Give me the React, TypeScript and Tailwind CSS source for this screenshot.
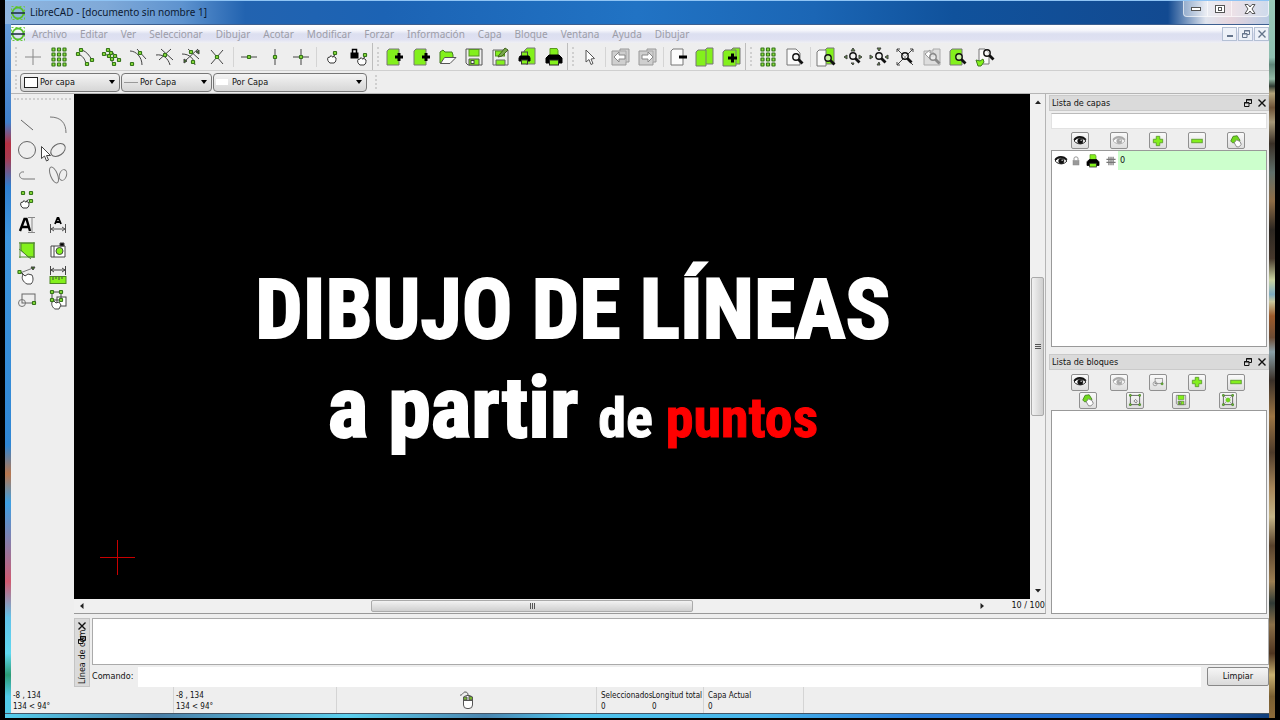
import React from 'react';

type IconProps = { children: React.ReactNode; className?: string };

function Icon({ children, className = 'h-6 w-6' }: IconProps) {
  return (
    <svg viewBox="0 0 24 24" className={`shrink-0 ${className}`} fill="none" stroke="#444" strokeWidth="1" aria-hidden="true">
      {children}
    </svg>
  );
}

const Node = ({ x, y }: { x: number; y: number }) => (
  <rect x={x - 1.5} y={y - 1.5} width="3" height="3" rx="0.5" fill="#8be03a" stroke="#35751a" strokeWidth="1.2" />
);

const Nodes = ({ at }: { at: number[][] }) => (
  <>
    {at.map(([x, y]) => (
      <Node key={`${x}-${y}`} x={x} y={y} />
    ))}
  </>
);

const Lens = ({ x, y, color = '#111' }: { x: number; y: number; color?: string }) => (
  <g stroke={color}>
    <circle cx={x} cy={y} r="3.2" fill="#f4f4f4" fillOpacity="0.6" strokeWidth="1.4" />
    <path d={`M${x + 2.5} ${y + 2.5}l4 4`} strokeWidth="2.8" />
  </g>
);

const Hand = ({ x, y }: { x: number; y: number }) => (
  <path
    transform={`translate(${x} ${y})`}
    d="M1 3.5C0 5 1 8 3 9h4c2-1 2-3 2-5L7 2.5 5.5 3 4 1.5 3 3zM5.5 3l3-2.5"
    fill="#fff"
    stroke="#333"
  />
);

const Page = ({ x, y, fill = '#83f01c', w = 12 }: { x: number; y: number; fill?: string; w?: number }) => (
  <path d={`M${x} ${y + 2}l2-2h${w - 2}v16h-${w}z`} fill={fill} stroke="#777" />
);

const PrinterShape = () => (
  <g>
    <path d="M8 3.5h7l1 2v6H8z" fill="#83f01c" stroke="#5a9a1c" />
    <path d="M7 10h10l3 3v5H4v-5z" fill="#000" stroke="#000" />
    <rect x="7.5" y="15" width="9" height="5" fill="#83f01c" stroke="#222" />
  </g>
);

const EyeShape = ({ color = '#111' }: { color?: string }) => (
  <g stroke={color}>
    <path d="M2 12c3-6 14-8 20 0-4 6-14 7-20 0z" fill="#fff" strokeWidth="1.6" />
    <path d="M2 10C6 3 17 3 22 10" strokeWidth="3" />
    <circle cx="12.5" cy="12" r="4.5" fill={color} />
    <circle cx="14" cy="10.5" r="1.2" fill="#fff" stroke="none" />
  </g>
);

const PlusShape = () => (
  <path d="M9 4h6v5h5v6h-5v5H9v-5H4V9h5z" fill="#83f01c" stroke="#5b9b2c" strokeWidth="1.5" />
);

const MinusShape = () => <rect x="3" y="9" width="18" height="6" fill="#83f01c" stroke="#5b9b2c" strokeWidth="1.5" />;

const EditShape = () => (
  <g>
    <path d="M3 12l4-8 7-1 5 8-5 4H6z" fill="#71d91d" stroke="#417c20" strokeWidth="1.4" />
    <path d="M9 15l4-5 6 3 2 5-4 4h-4z" fill="#fff" stroke="#777" strokeWidth="1.4" />
  </g>
);

const gridPoints = [4.5, 9.5, 14.5, 19.5].flatMap((y) => [6.5, 12, 17.5].map((x) => [x, y]));

const icons: Record<string, React.ReactNode> = {
  free: <path d="M12 4v16M4 12h16" stroke="#888" />,
  grid: <Nodes at={gridPoints} />,
  endpoint: (
    <>
      <path d="M8 5c5 2 7 5 10 10M4 9c5 2 7 5 8 10" />
      <Nodes at={[[7, 5], [4, 9], [18, 15], [13, 19]]} />
    </>
  ),
  onEntity: (
    <>
      <path d="M8 5c5 2 8 5 11 11M4 9c5 1 8 5 9 11" />
      <Nodes at={[[8, 5], [4, 9], [11, 8], [9, 11], [15, 11], [12, 14], [19, 15], [14, 19]]} />
    </>
  ),
  center: (
    <>
      <path d="M4 6c6 0 12 6 12 14M11 4l9 10" />
      <Nodes at={[[14, 8], [6, 19]]} />
    </>
  ),
  middle: (
    <>
      <path d="M3 10c7-1 12 3 14 10M18 4L6 15M8 4l12 11" />
      <Nodes at={[[12, 10]]} />
    </>
  ),
  distance: (
    <>
      <path d="M3 9c8 0 12 5 13 11M19 4L6 16M9 4l11 10" />
      <Nodes at={[[12, 7], [14, 17]]} />
      <path d="M20 5v4l-3-2zM5 14v4l3-2z" fill="#397819" />
    </>
  ),
  intersection: (
    <>
      <path d="M6 5l12 14M18 5L6 19" />
      <Node x={12} y={12} />
    </>
  ),
  horizontal: (
    <>
      <path d="M4 12h16" />
      <Node x={12} y={12} />
    </>
  ),
  vertical: (
    <>
      <path d="M12 4v16" />
      <Node x={12} y={12} />
    </>
  ),
  orthogonal: (
    <>
      <path d="M12 4v16M4 12h16" />
      <Node x={12} y={12} />
    </>
  ),
  relZero: (
    <>
      <Hand x={6} y={9} />
      <Node x={14} y={8} />
    </>
  ),
  lockZero: (
    <>
      <rect x="4" y="8" width="7" height="5" fill="#000" stroke="#000" />
      <path d="M5.5 8V4.5h4V8" stroke="#000" strokeWidth="1.5" />
      <Hand x={10} y={11} />
      <Node x={18} y={10} />
    </>
  ),
  newFile: (
    <>
      <Page x={4} y={4} />
      <path d="M12 12h8M16 8v8" stroke="#000" strokeWidth="3" />
    </>
  ),
  open: (
    <g stroke="#447d23">
      <path d="M4 18V7l3-2 2 2h7l1 3v3L5 18z" fill="#83f01c" />
      <path d="M4.5 18.5l4-6H20l-6 6z" fill="#fafafa" stroke="#555" />
    </g>
  ),
  save: (
    <>
      <path d="M4 4h16v16H6l-2-2z" fill="#eee" stroke="#555" />
      <rect x="7" y="4.5" width="10" height="6.5" fill="#83f01c" stroke="#579422" />
      <path d="M7 20v-6h10v6z" fill="#83f01c" stroke="#555" />
      <rect x="9" y="15.5" width="3" height="3" fill="#fff" />
    </>
  ),
  saveAs: (
    <>
      <path d="M4 5h15v15H4z" fill="#eee" stroke="#666" />
      <rect x="6.5" y="6" width="9" height="5" fill="#83f01c" stroke="#579422" />
      <path d="M7 20v-5h9v5z" fill="#83f01c" stroke="#666" />
      <path d="M10 10l6-7 3 2-6 6-4 1z" fill="#79a84d" stroke="#43641f" />
    </>
  ),
  preview: (
    <>
      <path d="M9 6l3-3h8v16h-9z" fill="#83f01c" stroke="#777" />
      <rect x="6.5" y="7" width="6" height="5" fill="#83f01c" stroke="#444" />
      <path d="M5 11h9l1 2v3H4v-3z" fill="#000" stroke="#000" />
      <rect x="6.5" y="15" width="6" height="4" fill="#83f01c" stroke="#333" />
    </>
  ),
  print: <PrinterShape />,
  arrow: <path d="M8 5v12l3-2.500 2 5 2-1-2-4.500 3.500-.5z" fill="#fff" stroke="#555" />,
  undo: (
    <>
      <path d="M11 4h9v13h-3v3H3V6h8z" fill="#cfcfcf" stroke="#999" />
      <path d="M11 6h6v11" stroke="#aaa" />
      <path d="M5 12l5-5v3h6v4h-6v3z" fill="#fff" stroke="#888" />
    </>
  ),
  redo: (
    <>
      <path d="M11 4h9v13h-3v3H3V6h8z" fill="#cfcfcf" stroke="#999" />
      <path d="M11 6h6v11" stroke="#aaa" />
      <path d="M17 12l-5-5v3H6v4h6v3z" fill="#fff" stroke="#888" />
    </>
  ),
  cut: (
    <>
      <Page x={4} y={4} fill="#fcfcfc" />
      <path d="M12 12h8" stroke="#000" strokeWidth="3" />
    </>
  ),
  copy: (
    <>
      <Page x={12} y={3} w={8} />
      <Page x={3} y={5} w={10} />
    </>
  ),
  paste: (
    <>
      <Page x={11} y={3} w={9} />
      <Page x={3} y={5} w={13} />
      <path d="M8 13h9M12.500 8.500v9" stroke="#000" strokeWidth="3" />
    </>
  ),
  zoomPage: (
    <>
      <path d="M4 4h9l4 4v12H4z" fill="#fafafa" stroke="#777" />
      <Lens x={13} y={12} />
    </>
  ),
  zoomRedraw: (
    <>
      <Page x={11} y={3} w={9} />
      <Page x={3} y={5} w={9} fill="#fafafa" />
      <Lens x={14} y={13} />
    </>
  ),
  zoomIn: (
    <>
      <path d="M12 3l2 3h-4zM3 12l3-2v4zM21 12l-3-2v4zM12 20l-2-2h3z" fill="#5f8c40" />
      <Lens x={12} y={11} />
    </>
  ),
  zoomOut: (
    <>
      <path d="M12 6l2-3h-4zM6 12l-3-2v4zM18 12l3-2v4zM10 20l2-3 1 3z" fill="#5f8c40" />
      <Lens x={12} y={11} />
    </>
  ),
  zoomAuto: (
    <>
      <path d="M4 4l16 16M20 4L4 20M4 7V4h3M17 4h3v3M4 17v3h3" />
      <Lens x={12} y={11} />
    </>
  ),
  zoomPrevious: (
    <>
      <path d="M4 6h9V4h7v16H4z" fill="#ddd" stroke="#aaa" />
      <path d="M5 9l5-4v3h4v3h-4v3z" fill="#fff" stroke="#999" />
      <Lens x={13} y={12} color="#888" />
    </>
  ),
  zoomWindow: (
    <>
      <Page x={4} y={4} />
      <Lens x={13} y={12} />
    </>
  ),
  zoomPan: (
    <>
      <path d="M6 4h6l4 4v11H6z" fill="#fafafa" stroke="#777" />
      <Lens x={14} y={8} />
      <path d="M3 15l4 1 3-2 1 3-3 4H5z" fill="#83f01c" stroke="#3f7c1f" />
    </>
  ),
  line: <path d="M6 7l12 10" stroke="#666" />,
  arc: <path d="M4 4c11 0 16 6 16 16" stroke="#777" />,
  circle: <circle cx="12" cy="12" r="8.500" stroke="#666" />,
  ellipse: <ellipse cx="12" cy="12" rx="8" ry="5.500" transform="rotate(-35 12 12)" stroke="#666" />,
  polyline: <path d="M9 9c-6-1-6 7 0 7h11" stroke="#777" />,
  spline: (
    <g stroke="#777">
      <ellipse cx="8" cy="12" rx="3.500" ry="8.500" transform="rotate(-22 8 12)" />
      <ellipse cx="17" cy="12" rx="3.500" ry="5.500" transform="rotate(18 17 12)" />
    </g>
  ),
  points: (
    <>
      <Hand x={5} y={11} />
      <Nodes at={[[8, 5], [16, 5], [16, 13]]} />
    </>
  ),
  text: (
    <>
      <path d="M5 18L9.500 6h2L15 18M7 14h6" stroke="#000" strokeWidth="2.400" />
      <path d="M13 4.500h7M13 19.500h7M17 5v14" stroke="#888" />
    </>
  ),
  mtext: (
    <>
      <path d="M9 11l2.500-6h1L15 11M10 9h4" stroke="#000" strokeWidth="1.800" />
      <path d="M4.500 11v9M19.500 11v9M5 16h14M8 14l-3 2 3 2M16 14l3 2-3 2" stroke="#555" />
    </>
  ),
  hatch: (
    <>
      <path d="M6 5h13v14H13L6 12z" fill="#83f01c" stroke="#4c8522" />
      <path d="M4 11l12 10M5 4v16M19 4v16M4 5h16M4 19h16" stroke="#558b35" />
    </>
  ),
  image: (
    <>
      <path d="M5 8h14v11H5zM8 8v11" fill="#fff" />
      <path d="M14 5h4v3h-4z" fill="#000" />
      <circle cx="13.500" cy="13" r="3.500" fill="#83f01c" />
    </>
  ),
  modify: (
    <>
      <path d="M5 10l13-5" stroke="#777" />
      <path d="M8 12c-2 3 0 7 4 9h4c3-3 2-7 1-9l-4-1-3 2-5-5z" fill="#fff" stroke="#444" />
      <path d="M16 4h4l-2 3z" fill="#397819" />
      <Node x={4.5} y={9} />
    </>
  ),
  measure: (
    <>
      <path d="M4.500 3v9M19.500 3v9M5 7h14M8 5L5 7l3 2M16 5l3 2-3 2" />
      <rect x="4" y="13.500" width="16" height="7" fill="#83f01c" stroke="#4c8522" />
      <path d="M7 14v3M10 14v2M13 14v3M16 14v2" />
    </>
  ),
  block: (
    <>
      <rect x="7" y="6" width="13" height="9" stroke="#666" />
      <circle cx="7" cy="15" r="3.500" stroke="#777" />
      <Node x={19} y={15} />
    </>
  ),
  select: (
    <>
      <rect x="11" y="9" width="9" height="9" fill="#fff" />
      <path d="M6 4h9v8H6z" />
      <path d="M6 14c-1 3 1 6 3 7h4l2-4-2-3-3 1-2-2z" fill="#fff" />
      <Nodes at={[[6, 4], [15, 4], [6, 12], [15, 12]]} />
    </>
  ),
  eye: <EyeShape />,
  eyeOff: <EyeShape color="#aaa" />,
  plus: <PlusShape />,
  minus: <MinusShape />,
  edit: <EditShape />,
  blockRename: (
    <>
      <rect x="4" y="4" width="16" height="16" stroke="#555" strokeWidth="1.500" />
      <Nodes at={[[4, 4], [20, 4], [4, 20], [20, 20]]} />
      <path d="M10 14l3-3 3 3-2 3z" />
    </>
  ),
  blockInsert: (
    <>
      <rect x="4" y="4" width="16" height="16" stroke="#555" strokeWidth="1.500" />
      <path d="M4 4l16 16M20 4L4 20" stroke="#777" />
      <path d="M8 12h8M12 8v8" stroke="#71d91d" strokeWidth="4" />
      <Nodes at={[[4, 4], [20, 4], [4, 20], [20, 20]]} />
    </>
  ),
  lock: (
    <>
      <rect x="6" y="11" width="12" height="9" fill="#999" stroke="#888" />
      <path d="M8 11V6c0-3 8-3 8 0v5" stroke="#999" strokeWidth="2" />
    </>
  ),
  construct: (
    <path d="M1 8h22M1 15h22M7 2v20M12 2v20M17 2v20" stroke="#777" strokeWidth="3" />
  ),
};

const menus = [
  'Archivo', 'Editar', 'Ver', 'Seleccionar', 'Dibujar', 'Acotar', 'Modificar',
  'Forzar', 'Información', 'Capa', 'Bloque', 'Ventana', 'Ayuda', 'Dibujar',
];

type Tool = [icon: string, label: string] | null;

const snapTools: Tool[] = [
  ['free', 'Forzado libre'], ['grid', 'Forzar a rejilla'], ['endpoint', 'Puntos finales'], ['onEntity', 'Sobre entidad'],
  ['center', 'Centros'], ['middle', 'Puntos medios'], ['distance', 'Distancia'], ['intersection', 'Intersección'], null,
  ['horizontal', 'Restringir horizontal'], ['vertical', 'Restringir vertical'], ['orthogonal', 'Restringir ortogonal'], null,
  ['relZero', 'Mover cero relativo'], ['lockZero', 'Bloquear cero relativo'],
];
const fileTools: Tool[] = [
  ['newFile', 'Nuevo'], ['newFile', 'Nuevo desde plantilla'], ['open', 'Abrir'], ['save', 'Guardar'],
  ['saveAs', 'Guardar como'], ['preview', 'Vista previa'], ['print', 'Imprimir'],
];
const editTools: Tool[] = [
  ['arrow', 'Seleccionar'], null, ['undo', 'Deshacer'], ['redo', 'Rehacer'], null,
  ['cut', 'Cortar'], ['copy', 'Copiar'], ['paste', 'Pegar'],
];
const viewTools: Tool[] = [
  ['grid', 'Rejilla'], ['zoomPage', 'Borrador'], null, ['zoomRedraw', 'Redibujar'], ['zoomIn', 'Acercar'],
  ['zoomOut', 'Alejar'], ['zoomAuto', 'Zoom automático'], ['zoomPrevious', 'Vista anterior'],
  ['zoomWindow', 'Zoom ventana'], ['zoomPan', 'Desplazar'],
];
const drawTools: Tool[] = [
  ['line', 'Línea'], ['arc', 'Arco'], ['circle', 'Círculo'], ['ellipse', 'Elipse'], ['polyline', 'Polilínea'],
  ['spline', 'Spline'], ['points', 'Puntos'], null, ['text', 'Texto'], ['mtext', 'Acotar'], ['hatch', 'Sombreado'],
  ['image', 'Imagen'], ['modify', 'Modificar'], ['measure', 'Información'], ['block', 'Bloque'], ['select', 'Seleccionar'],
];

function Handle() {
  return (
    <div className="w-[9px] shrink-0 self-stretch py-1 pl-1">
      <div className="h-full w-0 border-l-2 border-dotted border-[#cfcfcf]" />
    </div>
  );
}

function ToolGroup({ tools, label, className }: { tools: Tool[]; label: string; className: string }) {
  return (
    <div role="toolbar" aria-label={label} className={`flex shrink-0 items-center border-r ${className}`}>
      <Handle />
      {tools.map((tool, i) =>
        tool ? (
          <button key={i} title={tool[1]} className="flex min-w-0 flex-1 justify-center">
            <Icon>{icons[tool[0]]}</Icon>
          </button>
        ) : (
          <div key={i} className="flex w-[5px] justify-center">
            <div className="h-5 w-px bg-[#d4d4d4]" />
          </div>
        ),
      )}
    </div>
  );
}

function PenSelect({ label, value, swatch, className }: { label: string; value: string; swatch: string; className: string }) {
  return (
    <label className={`flex h-[19px] shrink-0 items-center rounded-sm border border-[#777] bg-linear-to-b from-[#f4f4f4] to-[#d6d6d6] pr-1 ${className}`}>
      <span className={`shrink-0 ${swatch}`} />
      <select aria-label={label} className="min-w-0 flex-1 appearance-none bg-transparent pt-0.5 outline-none">
        <option>{value}</option>
      </select>
      <svg viewBox="0 0 6 4" className="h-1 w-1.5 shrink-0" aria-hidden="true">
        <path d="M0 0h6L3 4z" />
      </svg>
    </label>
  );
}

function FloatGlyph() {
  return (
    <svg viewBox="0 0 8 8" className="h-2 w-2" fill="none" stroke="currentColor" aria-hidden="true">
      <path d="M2.500 3V.5h5v4H5M2 1h6M.5 3.500h4.500v4H.5zM0 4h5" />
    </svg>
  );
}

function CloseGlyph() {
  return (
    <svg viewBox="0 0 8 8" className="h-2 w-2" stroke="currentColor" strokeWidth="1.4" aria-hidden="true">
      <path d="M.5.5l7 7M7.500.5l-7 7" />
    </svg>
  );
}

function DockHeader({ title }: { title: string }) {
  return (
    <div className="flex h-4 shrink-0 items-center border border-[#cacaca] bg-[#dadada] px-0.5">
      <h2 className="flex-1 pt-0.5">{title}</h2>
      <button aria-label={`Separar ${title}`} className="mr-1.5"><FloatGlyph /></button>
      <button aria-label={`Cerrar ${title}`}><CloseGlyph /></button>
    </div>
  );
}

function DockButtons({ tools, className }: { tools: [string, string][]; className: string }) {
  return (
    <div className={`flex shrink-0 ${className}`}>
      {tools.map(([icon, label]) => (
        <div key={label} className="flex flex-1 justify-center">
          <button
            title={label}
            className="flex h-[17px] w-[18px] items-center justify-center rounded-xs border border-[#909090] bg-linear-to-b from-[#fafafa] to-[#dedede]"
          >
            <Icon className="h-3.5 w-3.5">{icons[icon]}</Icon>
          </button>
        </div>
      ))}
    </div>
  );
}

function Logo() {
  return (
    <svg viewBox="0 0 14 14" className="h-3.5 w-3.5 shrink-0" fill="none" aria-hidden="true">
      <rect x=".5" y=".5" width="13" height="13" stroke="#6ccb3a" strokeDasharray="2 2" />
      <circle cx="7" cy="7" r="5.500" stroke="#58c02b" strokeWidth="1.800" />
      <path d="M0 7h14" stroke="#234" strokeWidth="1.600" />
    </svg>
  );
}

function ScrollArrow({ label, path }: { label: string; path: string }) {
  return (
    <button aria-label={label} className="flex h-4 w-4 shrink-0 items-center justify-center">
      <svg viewBox="0 0 6 6" className="h-1.5 w-1.5" aria-hidden="true">
        <path d={path} fill="#222" />
      </svg>
    </button>
  );
}

function TitleBar() {
  return (
    <header className="flex h-6 shrink-0 items-center border-t border-[#8fc4f4] bg-[linear-gradient(90deg,#8fb5de_0,#7fa9d8_8%,#5e93cf_14%,#2263b0_19%,#1c63b4_30%,#2173c4_50%,#1b66b5_64%,#10529c_75%,#124a91_92%,#dfe4ee_95%,#e6d5dd_97%,#b9cbe4_100%)] pl-1.5">
      <Logo />
      <h1 className="ml-[5px] flex-1 text-[10px] text-[#0c1a33]">LibreCAD - [documento sin nombre 1]</h1>
      <div className="flex h-4 self-start overflow-hidden rounded-b-sm border border-t-0 border-white/60 bg-white/30 text-[#444]">
        <button aria-label="Minimizar" className="flex w-6 items-center justify-center border-r border-white/60">
          <span className="h-1 w-2.5 border border-[#555] bg-white" />
        </button>
        <button aria-label="Maximizar" className="flex w-6 items-center justify-center border-r border-white/60">
          <span className="flex h-2 w-2.5 items-center justify-center border border-[#555] bg-white">
            <span className="h-1 w-1 border border-[#555]" />
          </span>
        </button>
        <button aria-label="Cerrar" className="flex w-9 items-center justify-center">
          <svg viewBox="0 0 12 10" className="h-2.5 w-3" aria-hidden="true">
            <path d="M1 .5h3l2 2.500 2-2.500h3L8 5l3 4.500H8L6 7 4 9.500H1L4 5z" fill="#fff" stroke="#555" />
          </svg>
        </button>
      </div>
    </header>
  );
}

function MenuBar() {
  return (
    <nav className="flex h-[19px] shrink-0 items-center border-t border-[#3c5f90] bg-[linear-gradient(180deg,#fff_0,#f4f5fb_30%,#dcdff0_50%,#dfe1f2_80%,#f0f0f4_100%)]">
      <Logo />
      <div className="flex flex-1">
        {menus.map((menu, i) => (
          <button key={i} className="pl-[7px] pr-1.5 text-[10px] text-[#9c9da8]">{menu}</button>
        ))}
      </div>
      <div className="flex gap-px text-[#64748b]">
        <button aria-label="Minimizar documento" className="flex h-3.5 w-[15px] items-end justify-center border border-[#b4c0d4] bg-[#edf1f8] pb-[3px]">
          <span className="h-0.5 w-1.5 bg-[#64748b]" />
        </button>
        <button aria-label="Restaurar documento" className="flex h-3.5 w-[15px] items-center justify-center border border-[#b4c0d4] bg-[#edf1f8]"><FloatGlyph /></button>
        <button aria-label="Cerrar documento" className="flex h-3.5 w-[15px] items-center justify-center border border-[#b4c0d4] bg-[#edf1f8]"><CloseGlyph /></button>
      </div>
    </nav>
  );
}

function DrawToolbar() {
  return (
    <aside role="toolbar" aria-label="Dibujar" className="relative w-[63px] shrink-0 px-px pt-1">
      <div className="mx-0.5 h-0 border-t-2 border-dotted border-[#cfcfcf]" />
      <div className="mt-3 grid auto-rows-[25px] grid-cols-2 items-center justify-items-center">
        {drawTools.map((tool, i) =>
          tool ? (
            <button key={i} title={tool[1]}><Icon>{icons[tool[0]]}</Icon></button>
          ) : (
            <span key={i} />
          ),
        )}
      </div>
      {/* mouse pointer */}
      <svg viewBox="0 0 10 16" className="absolute left-[30px] top-[52px] h-4 w-2.5" aria-hidden="true">
        <path d="M.5.5v12l3-2.500 2 5 2-1-2-4.500h4z" fill="#fff" stroke="#444" />
      </svg>
    </aside>
  );
}

function Canvas() {
  return (
    <section className="flex min-w-0 flex-1 flex-col border-b border-r border-[#999] border-r-[#b5b5b5]">
      <div className="flex min-h-0 flex-1">
        <div className="relative flex min-w-0 flex-1 flex-col items-center bg-black pl-[42px] pt-[167px] font-['Roboto_Condensed','Open_Sans_Condensed',sans-serif] font-bold text-white">
          <p className="text-[84px] leading-[98px] whitespace-nowrap [-webkit-text-stroke:2px_white]">DIBUJO DE LÍNEAS</p>
          <p className="text-[86px] leading-[98px] whitespace-nowrap [-webkit-text-stroke:2px_white]">
            a partir <span className="text-[56px] [-webkit-text-stroke:1px_white]">de <span className="text-[#f00] [-webkit-text-stroke:1px_#f00]">puntos</span></span>
          </p>
          <svg viewBox="0 0 35 35" className="absolute bottom-6 left-[26px] h-[35px] w-[35px]" fill="#c80000" shapeRendering="crispEdges" aria-hidden="true">
            <path d="M17 0h1v35h-1zM0 17h35v1H0z" />
          </svg>
        </div>
        <div className="flex w-[15px] shrink-0 flex-col items-center bg-[#f0f0f0]">
          <ScrollArrow label="Subir" path="M0 5h6L3 1.500z" />
          <div className="flex-[168]" />
          <div className="flex w-[13px] flex-[138] flex-col items-center justify-center gap-px rounded-xs border border-[#aaa] bg-linear-to-r from-[#f2f2f2] to-[#cfcfcf]">
            <span className="h-px w-1.5 bg-[#555]" />
            <span className="h-px w-1.5 bg-[#555]" />
            <span className="h-px w-1.5 bg-[#555]" />
          </div>
          <div className="flex-[168]" />
          <ScrollArrow label="Bajar" path="M0 1h6L3 4.500z" />
        </div>
      </div>
      <div className="flex h-[14px] shrink-0 items-center bg-[#f0f0f0]">
        <ScrollArrow label="Izquierda" path="M4.500 0v6L1 3z" />
        <div className="flex-[281]" />
        <div className="flex h-3 flex-[321] items-center justify-center gap-px rounded-xs border border-[#aaa] bg-linear-to-b from-[#f2f2f2] to-[#cfcfcf]">
          <span className="h-1.5 w-px bg-[#555]" />
          <span className="h-1.5 w-px bg-[#555]" />
          <span className="h-1.5 w-px bg-[#555]" />
        </div>
        <div className="flex-[281]" />
        <ScrollArrow label="Derecha" path="M1.500 0v6L5 3z" />
        <span className="w-[55px] text-right whitespace-nowrap">10 / 100</span>
      </div>
    </section>
  );
}

function Docks() {
  return (
    <aside className="ml-[3px] flex w-[220px] shrink-0 flex-col pt-px">
      <DockHeader title="Lista de capas" />
      <div className="flex flex-[236] flex-col px-0.5 pt-0.5">
        <input aria-label="Filtrar capas" className="mb-[3px] h-4 w-full shrink-0 border border-[#e2e2e2] border-t-[#bbb] bg-white outline-none" />
        <DockButtons
          className="pb-px pl-2.5 pr-3"
          tools={[['eye', 'Mostrar capas'], ['eyeOff', 'Ocultar capas'], ['plus', 'Añadir capa'], ['minus', 'Quitar capa'], ['edit', 'Editar capa']]}
        />
        <div className="flex-1 border border-[#999] bg-white">
          <div className="flex h-[19px] items-center">
            <button title="Visible" className="flex w-[17px] justify-center"><Icon className="h-3.5 w-3.5">{icons.eye}</Icon></button>
            <button title="Bloquear" className="flex w-[14px] justify-center"><Icon className="h-3 w-3">{icons.lock}</Icon></button>
            <button title="Imprimir" className="flex w-[20px] justify-center"><Icon className="h-[18px] w-[18px]">{icons.print}</Icon></button>
            <button title="Construcción" className="flex w-[15px] justify-center"><Icon className="h-2.5 w-2.5">{icons.construct}</Icon></button>
            <span className="flex h-full flex-1 items-center bg-[#ccffcc] pl-0.5">0</span>
          </div>
        </div>
      </div>
      <div className="h-[7px] shrink-0" />
      <DockHeader title="Lista de bloques" />
      <div className="flex flex-[243] flex-col px-0.5 pt-1">
        <DockButtons
          className="pb-px pl-2.5 pr-3"
          tools={[['eye', 'Mostrar bloques'], ['eyeOff', 'Ocultar bloques'], ['block', 'Crear bloque'], ['plus', 'Añadir bloque'], ['minus', 'Quitar bloque']]}
        />
        <DockButtons
          className="pb-px pl-3.5 pr-4"
          tools={[['edit', 'Renombrar bloque'], ['blockRename', 'Editar bloque'], ['save', 'Guardar bloque'], ['blockInsert', 'Insertar bloque']]}
        />
        <div className="flex-1 border border-[#999] bg-white" />
      </div>
    </aside>
  );
}

function CommandLine() {
  return (
    <section className="flex h-[73px] shrink-0 pt-1">
      <div className="relative w-4 shrink-0 border border-[#c4c4c4] bg-[#dadada]">
        <h2 className="h-full rotate-180 overflow-hidden pt-0.5 text-left leading-[14px] whitespace-nowrap [writing-mode:vertical-rl]">Línea de com</h2>
        <div className="absolute left-[3px] top-[3px] flex flex-col gap-1.5">
          <button aria-label="Cerrar línea de comandos"><CloseGlyph /></button>
          <button aria-label="Separar línea de comandos"><FloatGlyph /></button>
        </div>
      </div>
      <div className="ml-0.5 flex min-w-0 flex-1 flex-col">
        <textarea aria-label="Historial de comandos" readOnly className="block h-[47px] w-full resize-none border border-[#aaa] bg-white outline-none" />
        <div className="flex flex-1 items-center">
          <label htmlFor="command" className="w-[46px] shrink-0 pt-0.5">Comando:</label>
          <input id="command" className="h-5 min-w-0 flex-1 self-end bg-white px-1 outline-none" />
          <button className="ml-1.5 h-[19px] w-[62px] shrink-0 rounded-xs border border-[#888] bg-linear-to-b from-[#f6f6f6] to-[#dadada] pt-0.5">Limpiar</button>
        </div>
      </div>
    </section>
  );
}

function StatusBar() {
  return (
    <footer className="flex h-[26px] shrink-0 bg-[#eeeeee] text-[8px] leading-[11px] *:border-[#d4d4d4] *:pt-[3px]">
      <div className="w-[163px] border-r pl-0.5"><p>-8 , 134</p><p>134 &lt; 94°</p></div>
      <div className="w-[163px] border-r pl-0.5"><p>-8 , 134</p><p>134 &lt; 94°</p></div>
      <div className="flex w-[260px] justify-center border-r">
        <svg viewBox="0 0 18 20" className="h-5 w-[18px]" fill="none" stroke="#555" aria-hidden="true">
          <path d="M2 5c2 1 3-3 5-3 2 0 3 1 3 3" />
          <rect x="5.500" y="5.500" width="9" height="13" rx="3.500" fill="#fff" />
          <path d="M5.500 10V7h3.500v3zM11 10V6l3.500 1v3z" fill="#77b82c" />
          <path d="M5.500 10.500h9" />
        </svg>
      </div>
      <div className="flex w-[107px] border-r pl-1 whitespace-nowrap">
        <div className="w-[51px]"><p>Seleccionados</p><p>0</p></div>
        <div><p>Longitud total</p><p>0</p></div>
      </div>
      <div className="w-[100px] border-r pl-1"><p>Capa Actual</p><p>0</p></div>
    </footer>
  );
}

export default function App() {
  return (
    <div className="flex h-screen min-h-[480px] bg-black pb-0.5 pl-[5px] pr-[5px] font-['DejaVu_Sans_Condensed','Noto_Sans',sans-serif] text-[9px] text-[#111]">
      <div className="flex min-w-0 flex-1 flex-col bg-[linear-gradient(180deg,#6fa3dc_0,#3f80cc_17%,#b63142_20%,#a83a50_22%,#2f7fd0_26%,#3f97df_33%,#2f86d4_62%,#b9764d_66%,#3da0e4_70%,#d05a70_81%,#62c3ea_86%,#5fd8f0_91%,#2c9b74_94%,#52cbe9_97%)]">
        <div className="font-['Noto_Sans',sans-serif]"><TitleBar /></div>
        <div className="ml-1.5 flex min-h-0 flex-1 flex-col bg-[#eeeeee]">
          <div className="font-['Noto_Sans',sans-serif]"><MenuBar /></div>
          <div className="flex h-7 shrink-0 border-b border-[#cfcfcf] *:border-[#bdbdbd]">
            <ToolGroup tools={snapTools} label="Forzar" className="w-[362px]" />
            <ToolGroup tools={fileTools} label="Archivo" className="w-[195px]" />
            <ToolGroup tools={editTools} label="Editar" className="w-[178px]" />
            <ToolGroup tools={viewTools} label="Vista" className="w-[252px] border-r-0" />
          </div>
          <div className="flex h-[23px] shrink-0 items-center border-b border-[#b5b5b5]">
            <Handle />
            <PenSelect label="Color" value="Por capa" className="w-[100px] pl-[3px]" swatch="h-[11px] w-3.5 border border-[#222] bg-white mr-0.5" />
            <PenSelect label="Ancho de línea" value="Por Capa" className="ml-px w-[91px] pl-0.5" swatch="h-px w-3.5 bg-[#999] mr-0.5" />
            <PenSelect label="Tipo de línea" value="Por Capa" className="ml-px mr-1 w-[154px] pl-0.5" swatch="h-1.5 w-3 bg-white mr-1" />
            <Handle />
          </div>
          <div className="flex min-h-0 flex-1">
            <DrawToolbar />
            <div className="flex min-w-0 flex-1 flex-col">
              <div className="flex min-h-0 flex-1">
                <Canvas />
                <Docks />
              </div>
              <CommandLine />
            </div>
          </div>
          <StatusBar />
        </div>
        <div className="h-[5px] shrink-0 border-t border-[#456] bg-[linear-gradient(90deg,#55cfee_0,#4a7fa8_12%,#5cd0ee_27%,#4a86b0_38%,#4fc4ec_45%,#47b4ea_60%,#2b7fdc_72%,#1f6bd0_90%,#0f3f7c_100%)]" />
      </div>
      <div className="w-1.5 shrink-0 bg-[linear-gradient(180deg,#9ac9b8_0,#8fbfb0_8%,#5f8578_9%,#93b9a5_11%,#2f3b33_12%,#b2a27a_13%,#6d5237_15%,#a59878_17%,#3a3027_20%,#5f6f6a_24%,#8e6c46_28%,#2c2721_32%,#46382c_36%,#c9d3a0_39%,#7dabc0_41%,#c9c79c_42%,#9c5a2b_44%,#6b4b34_47%,#8aa0a8_49%,#3a3028_53%,#9a7444_58%,#4e3b2a_63%,#a8875a_68%,#c4b486_72%,#57412c_76%,#9c7e52_81%,#2f3a36_84%,#8a6f48_87%,#4f3520_91%,#c8b070_94%,#7a5f32_97%,#8d6b3a_100%)]" />
    </div>
  );
}
